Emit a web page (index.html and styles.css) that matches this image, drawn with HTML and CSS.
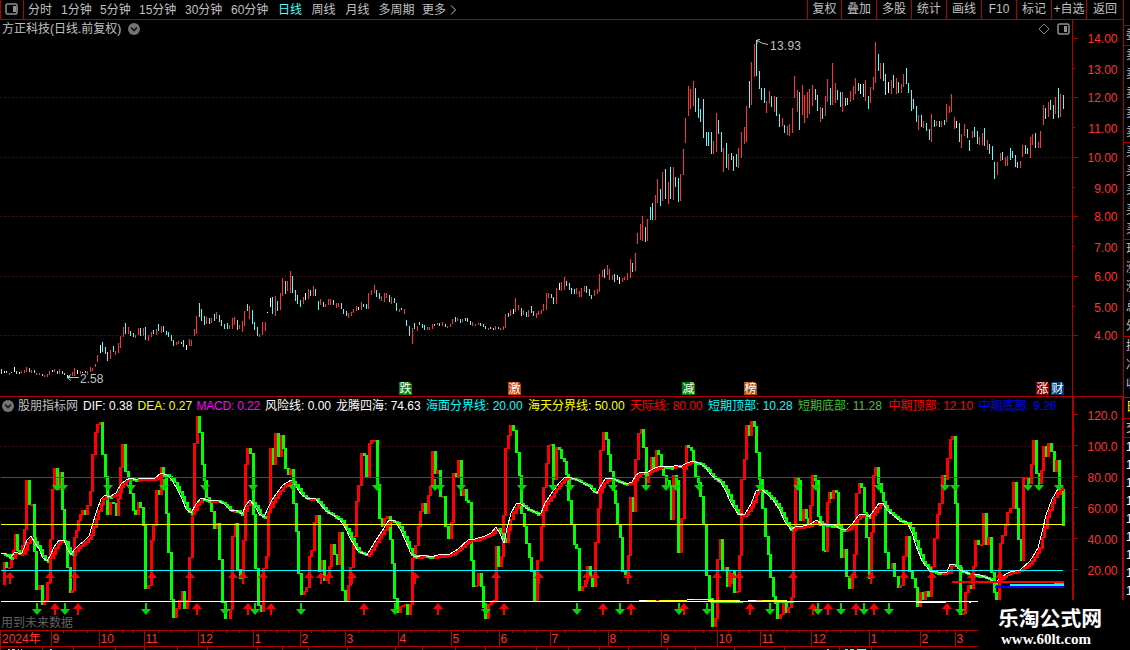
FILE: index.html
```
<!DOCTYPE html>
<html lang="zh-CN">
<head>
<meta charset="UTF-8">
<title>方正科技</title>
<link rel="stylesheet" href="styles.css">
</head>
<body>

<div class="header">
    <div class="panel-btn">
        <svg width="14" height="12"><rect x="1" y="1" width="11" height="10" rx="1.5" class="ico-box"/><rect x="8" y="3" width="3" height="6" class="ico-fill"/></svg>
    </div>
    <div class="periods">
        <span>分时</span><span>1分钟</span><span>5分钟</span><span>15分钟</span><span>30分钟</span><span>60分钟</span>
        <span class="active">日线</span><span>周线</span><span>月线</span><span>多周期</span><span>更多</span>
        <svg width="7" height="10"><path d="M1 0.5L5.5 5L1 9.5" class="more"/></svg>
    </div>
    <div class="tools">
        <span>复权</span><span>叠加</span><span>多股</span><span>统计</span><span>画线</span><span>F10</span><span>标记</span><span>+自选</span><span>返回</span>
    </div>
    <div class="side-top"></div>
</div>

<div class="body">
    <div class="main">
        <div class="price">
            <div class="price-left">
                <div class="title">
                    <span>方正科技(日线.前复权)</span>
                    <svg width="12" height="12"><circle cx="6" cy="6" r="6" class="dot"/><path d="M3 4.5L6 7.5L9 4.5" class="chev"/></svg>
                    <div class="title-icons">
                        <svg width="12" height="12"><path d="M6 1L11 6L6 11L1 6Z" class="diamond"/></svg>
                        <svg width="13" height="12"><rect x="1" y="1" width="11" height="10" rx="1.5" class="ico-box"/><rect x="7" y="3" width="3" height="6" class="ico-fill"/></svg>
                    </div>
                </div>
                <svg id="price" width="1072" height="358" viewBox="0 38 1072 358"></svg>
            </div>
            <svg id="priceAxis" width="51" height="376" viewBox="1072 20 51 376"></svg>
        </div>
        <div class="indicator">
            <div class="ind-left">
                <div class="legend">
                    <svg width="12" height="12"><circle cx="6" cy="6" r="6" class="dot"/><path d="M3 4.5L6 7.5L9 4.5" class="chev"/></svg>
                    <span class="name">股朋指标网</span>
                    <span class="white">DIF: 0.38</span>
                    <span class="yellow">DEA: 0.27</span>
                    <span class="magenta">MACD: 0.22</span>
                    <span class="white">风险线: 0.00</span>
                    <span class="white">龙腾四海: 74.63</span>
                    <span class="cyan">海面分界线: 20.00</span>
                    <span class="yellow">海天分界线: 50.00</span>
                    <span class="red">天际线: 80.00</span>
                    <span class="cyan">短期顶部: 10.28</span>
                    <span class="green">短期底部: 11.28</span>
                    <span class="red">中期顶部: 12.10</span>
                    <span class="blue">中期底部: 9.26</span>
                </div>
                <svg id="ind" width="1072" height="216" viewBox="0 414 1072 216"></svg>
            </div>
            <svg id="indAxis" width="51" height="233" viewBox="1072 397 51 233"></svg>
        </div>
        <svg id="time" width="1123" height="20" viewBox="0 630 1123 20"></svg>
    </div>
    <div class="side">
        <div class="cell h20"><i>委</i></div>
        <div class="cell h97"><i>卖</i><i>卖</i><i>卖</i><i>卖</i><i>卖</i></div>
        <div class="cell h97"><i>买</i><i>买</i><i>买</i><i>买</i><i>买</i></div>
        <div class="cell h97"><i>现</i><i>涨</i><i>涨</i><i>总</i><i>外</i></div>
        <div class="cell h61"><i>换</i><i>净</i><i>收</i></div>
        <div class="cell h21"><i class="yellow">日</i></div>
        <div class="cell h19"><i>交</i></div>
        <div class="cell ones"><i>1</i><i>1</i><i>1</i><i>1</i><i>1</i><i>1</i><i>1</i><i>1</i><i>1</i></div>
    </div>
</div>

<div class="mark">
    <div class="mark-name">乐淘公式网</div>
    <div class="mark-url">www.60lt.com</div>
</div>

<script src="chart.js"></script>
</body>
</html>
```

FILE: styles.css
```
* { box-sizing: border-box; }
body { margin: 0; width: 1130px; height: 650px; overflow: hidden; position: relative; background: #000; color: #c0c0c0; font: 12px/14px "Liberation Sans", "Noto Sans CJK SC", sans-serif; }
svg { display: block; flex: none; }
span { white-space: nowrap; }

.header { display: flex; height: 20px; }
.panel-btn { width: 24px; border: 1px solid #b00000; border-top: none; padding: 3px 0 0 4px; }
.periods { flex: 1; display: grid; grid-template-columns: 33px 39px 39px 46px 46px 47px 33.5px 34px 33px 43.5px 28px 8px; align-items: center; padding-left: 4px; border-bottom: 1px solid #b00000; }
.periods .active { color: #54fcfc; }
.tools { display: grid; grid-template-columns: 34px repeat(7, 35px) 37px; border-bottom: 1px solid #b00000; line-height: 19px; text-align: center; }
.tools span { border-left: 1px solid #b00000; }
.side-top { width: 7px; border-left: 1px solid #b00000; }

.ico-box { fill: none; stroke: #909090; stroke-width: 1.5; }
.ico-fill { fill: #909090; }
.more { fill: none; stroke: #c0c0c0; }
.dot { fill: #747474; }
.chev { fill: none; stroke: #111; stroke-width: 1.6; }
.diamond { fill: none; stroke: #808080; }

.body { display: flex; height: 630px; }
.main { width: 1123px; }
.price, .indicator { display: flex; }
.price { height: 376px; }
.price-left, .ind-left { width: 1072px; }
.title { display: flex; align-items: center; height: 18px; padding-left: 2px; }
.title > svg { margin-left: 7px; }
.title-icons { display: flex; gap: 7px; margin-left: auto; padding-right: 2px; }

.indicator { height: 234px; }
.legend { display: grid; height: 18px; padding: 1px 0 0 2px; align-items: center; border-top: 1px solid #b00000; grid-template-columns: 16px 65px 54.5px 59px 68.5px 71px 90px 102px 102px 78px 90px 90.5px 90px 90px; }
.white { color: #fff; }
.yellow { color: #ff0; }
.magenta { color: #f0f; letter-spacing: -0.2px; }
.cyan { color: #0ff; }
.red { color: #f00; }
.green { color: #40c040; }
.blue { color: #00f; }

.side { width: 7px; overflow: hidden; border-left: 1px solid #b00000; padding-top: 5px; }
.cell { border-top: 1px solid #b00000; padding-left: 2px; overflow: hidden; }
.cell i { display: block; width: 14px; height: 19.2px; line-height: 19px; font-style: normal; }
.h20 { height: 20px; }
.h97 { height: 97px; }
.h61 { height: 61px; }
.h21 { height: 21px; }
.h19 { height: 19px; }
.ones i { height: 18px; color: #fff; }

.mark { position: absolute; left: 978px; top: 600px; width: 152px; height: 50px; background: #000; color: #fff; }
.mark-name { padding: 4px 0 0 20px; font: bold 20.8px/27px "Noto Sans CJK SC", sans-serif; white-space: nowrap; }
.mark-url { padding: 0 0 0 23px; font: bold 15px/17px "Liberation Serif", serif; }

svg text { font-size: 12px; }
.axis-text { fill: #ff3232; text-anchor: end; }
.month { fill: #ff3232; }
.note { fill: #c0c0c0; }
.warn { fill: #606060; }
.tag { fill: #fff; text-anchor: middle; }
.ma { fill: none; stroke: #fff; stroke-width: 1; shape-rendering: crispEdges; }
.note-line { fill: none; stroke: #c0c0c0; }
```

FILE: chart.js
```
const NS = "http://www.w3.org/2000/svg";
const RED = "#b00000";
const GRID = "#900000";

function add(svg, tag, attrs, text){
    const el = document.createElementNS(NS, tag);
    for(const k in attrs) el.setAttribute(k, attrs[k]);
    if(text) el.textContent = text;
    svg.appendChild(el);
}
function rect(svg, x, y, w, h, fill){
    add(svg, "rect", {x: x, y: y, width: w, height: h, fill: fill, "shape-rendering": "crispEdges"});
}
function dots(svg, y, from){
    for(let x = from; x < 1072; x += 4) rect(svg, x, y, 1, 1, GRID);
}

// candles: x top bottom colour
const candles = `1 369 373 c,4 371 372 w,6 371 372 c,9 373 374 r,11 372 372 c,14 367 371 w,16 371 373 c,19 372 373 w,21 371 372 r,24 370 372 r,26 367 371 r,29 368 371 c,31 370 372 r,34 370 372 c,36 373 374 r,39 373 374 r,42 374 375 c,44 375 376 r,47 374 376 r,49 371 374 r,52 370 371 w,54 369 371 r,57 371 373 c,59 369 373 r,62 371 373 c,64 373 374 c,67 375 376 w,69 376 377 c,72 372 375 r,74 368 375 r,77 370 373 w,80 371 373 r,82 372 372 w,85 371 372 c,87 371 374 r,90 367 371 r,92 368 370 r,95 364 366 r,97 355 361 r,100 345 352 w,102 342 351 c,105 347 353 c,107 352 360 c,110 350 358 r,113 346 351 c,115 351 354 r,118 343 352 r,120 336 347 r,123 327 336 r,125 323 333 c,128 327 333 r,130 331 335 c,133 333 336 c,135 335 337 r,138 328 334 r,140 328 335 c,143 328 335 r,145 327 339 c,148 335 340 r,151 332 336 r,153 330 333 c,156 329 334 r,158 324 330 c,161 326 332 r,163 326 331 c,166 331 334 c,168 332 336 c,171 335 340 c,173 340 345 c,176 342 344 r,178 341 343 r,181 342 343 c,183 340 346 c,186 345 349 w,189 339 345 r,191 340 345 r,194 329 335 r,196 316 333 r,199 303 316 c,201 309 320 c,204 316 324 c,206 317 323 r,209 318 323 c,211 318 322 r,214 314 320 c,216 312 318 r,219 315 321 c,221 320 325 c,224 324 328 c,227 323 328 c,229 325 328 r,232 318 328 r,234 317 324 r,237 320 329 c,239 325 328 r,242 321 331 r,244 311 325 r,247 304 310 c,249 306 318 r,252 310 323 c,254 322 329 c,257 327 335 c,259 334 336 r,262 322 334 r,265 322 330 r,267 312 312 w,270 298 306 w,272 297 313 c,275 296 315 r,277 301 310 c,280 293 309 r,282 278 295 r,285 281 293 c,287 281 290 r,290 271 292 r,292 276 292 c,295 290 300 c,297 295 303 c,300 300 306 c,303 297 303 r,305 293 299 w,308 289 298 r,310 290 295 c,313 286 295 r,315 289 295 c,318 301 309 c,320 299 304 r,323 302 306 c,325 304 306 r,328 299 304 r,330 299 304 r,333 300 304 c,336 303 307 r,338 303 306 r,341 303 308 c,343 309 313 c,346 311 315 c,348 313 317 r,351 312 315 r,353 309 312 r,356 306 310 r,358 307 309 w,361 302 309 r,363 304 306 c,366 304 308 c,368 293 308 r,371 290 294 r,374 285 292 r,376 290 296 c,379 293 298 c,381 296 300 r,384 293 301 r,386 293 297 r,389 295 301 c,391 297 303 r,394 298 302 c,396 303 310 c,
399 309 311 r,401 308 309 c,404 309 313 r,406 320 325 c,409 326 335 c,412 328 343 r,414 323 328 c,417 326 330 r,419 322 324 c,422 324 327 c,424 325 329 c,427 327 329 r,429 327 329 r,432 324 328 r,434 324 325 c,437 323 324 r,439 323 325 c,442 322 325 r,445 324 326 c,447 326 327 r,450 324 326 r,452 319 323 r,455 317 321 c,457 318 320 r,460 319 322 c,462 319 321 r,465 318 320 c,467 318 321 c,470 321 324 c,472 322 325 r,475 324 325 r,478 323 324 r,480 323 325 c,483 324 326 c,485 326 328 c,488 328 329 r,490 327 328 c,493 328 329 c,495 326 329 r,498 327 328 c,500 328 329 r,503 326 329 r,505 314 327 r,508 313 316 c,510 310 315 r,513 309 313 w,515 298 311 r,518 305 309 r,521 308 315 c,523 310 314 r,526 312 316 c,528 310 316 r,531 306 312 c,533 311 315 c,536 313 317 r,538 311 314 r,541 310 313 r,543 304 310 r,546 293 309 r,548 293 297 r,551 294 297 c,553 297 303 c,556 288 303 r,559 283 289 w,561 282 290 r,564 277 289 r,566 281 285 c,569 283 289 c,571 288 293 c,574 289 293 c,576 288 293 r,579 291 296 r,581 288 296 r,584 286 291 r,586 286 292 c,589 289 295 c,591 295 298 c,594 290 295 r,597 289 293 r,599 274 291 r,602 270 276 r,604 269 277 c,607 265 274 r,609 269 279 r,612 275 279 r,614 274 281 c,617 275 279 c,619 277 283 w,622 278 281 r,624 277 279 r,627 273 279 r,630 259 277 r,632 263 271 c,635 253 270 r,637 233 243 r,640 224 239 r,642 216 240 r,645 227 241 c,647 219 240 r,650 207 219 c,652 203 219 c,655 195 219 r,657 179 202 r,660 189 205 c,662 172 200 r,665 169 198 c,668 182 203 r,670 167 198 c,673 167 199 r,675 177 186 c,678 178 201 c,
680 174 200 r,683 149 174 r,685 118 142 r,688 86 115 r,690 89 108 r,693 81 105 r,695 88 111 c,698 98 117 c,700 109 121 c,703 99 137 c,706 132 145 c,708 132 145 c,711 132 153 c,713 141 153 r,716 113 151 r,718 120 133 c,721 132 151 c,723 148 171 r,726 143 167 c,728 154 169 r,731 153 159 c,733 156 170 c,736 154 166 c,738 148 167 r,741 132 157 r,744 127 143 r,746 106 141 r,749 81 107 c,751 62 104 r,754 44 76 r,756 40 75 c,759 71 88 c,761 88 99 c,764 88 102 c,766 101 112 r,769 91 102 r,771 96 106 c,774 96 111 r,776 97 115 c,779 114 126 c,782 118 125 r,784 125 132 c,787 126 134 r,789 124 135 r,792 108 132 r,794 76 97 r,797 90 111 r,799 92 129 c,802 85 114 r,804 95 122 r,807 92 117 r,809 89 113 r,812 85 105 r,815 89 99 c,817 95 110 c,820 107 121 r,822 108 118 c,825 96 115 r,827 79 101 r,830 88 104 c,832 63 104 r,835 83 102 r,837 90 99 c,840 92 106 c,842 92 111 r,845 98 105 c,847 98 104 c,850 91 101 r,853 86 99 r,855 78 93 r,858 83 90 c,860 84 93 w,863 84 96 c,865 80 100 r,868 96 108 c,870 87 102 r,873 77 89 r,875 42 82 r,878 54 70 c,880 63 78 r,883 63 80 c,885 74 94 c,888 82 92 w,891 80 93 r,893 75 87 c,896 78 93 r,898 82 92 c,901 84 92 r,903 74 86 r,906 68 83 c,908 83 92 c,911 90 110 c,913 99 108 c,916 106 121 c,918 115 129 r,921 115 126 c,923 121 127 r,926 123 130 c,929 129 139 c,931 114 141 r,934 120 126 c,936 121 125 r,939 121 126 c,941 121 126 r,944 120 124 c,946 104 121 r,949 106 112 r,951 94 111 r,954 117 128 r,956 121 127 w,959 123 141 c,961 134 147 r,964 124 135 r,967 129 137 c,969 140 150 c,972 131 137 r,974 127 136 c,977 131 143 c,979 137 144 r,982 133 144 r,984 128 145 c,987 140 149 r,989 144 153 c,992 146 159 c,994 162 178 c,997 162 174 r,1000 153 160 r,1002 152 159 c,1005 157 165 r,1007 156 165 r,1010 148 159 c,1012 151 157 c,1015 155 166 c,1017 162 167 c,1020 161 167 r,1022 145 156 r,1025 145 153 c,1027 148 153 c,1030 137 157 r,1032 134 144 r,1035 133 147 c,1038 142 147 r,1040 131 147 r,1043 105 124 r,1045 108 118 c,1048 102 116 r,1050 100 109 c,1053 105 118 c,1055 97 113 r,1058 88 117 c,1060 94 116 r,1063 95 108 c`;

const colors = {r: "#ff3232", c: "#54fcfc", w: "#fff"};
const price = document.getElementById("price");
[97, 157, 216, 276, 335].forEach(y => dots(price, y, 1));
candles.split(",").forEach(s => {
    const [x, a, b, c] = s.trim().split(" ");
    rect(price, +x, +a, 1, b - a + 1, colors[c]);
});
add(price, "text", {x: 770, y: 50, class: "note", textLength: 31}, "13.93");
add(price, "path", {d: "M768 44.5L763 43.5L757 40.5M757 44L757 40L760 39.5", class: "note-line"});
add(price, "text", {x: 80, y: 383, class: "note"}, "2.58");
add(price, "path", {d: "M79 377.5H67M71 374.5L67 377.5L71 380.5", class: "note-line"});

[[399, "跌", "#008000"], [508, "激", "#c04010"], [682, "减", "#008000"], [744, "榜", "#b05010"], [1036, "涨", "#800000"], [1051, "财", "#003c74"]].forEach(t => {
    add(price, "path", {d: `M${t[0]} 382h11l2 2v11h-13z`, fill: t[2]});
    add(price, "text", {x: t[0] + 6.5, y: 393, class: "tag"}, t[1]);
});

const pAxis = document.getElementById("priceAxis");
rect(pAxis, 1072, 20, 1, 376, RED);
[38, 68, 97, 127, 157, 187, 216, 246, 276, 306, 335].forEach((y, i) => {
    rect(pAxis, 1073, y, i % 2 ? 2 : 5, 1, RED);
    const ly = [43, 74, 102, 133, 162, 193, 221, 252, 281, 312, 340][i];
    add(pAxis, "text", {x: 1117.5, y: ly, class: "axis-text"}, (14 - i) + ".00");
});

// oscillator: every bar runs from the last level to this one
const osc = `3,584 3,562 5,567 8,567 10,555 12,550 14,534 16,550 18,552 21,545 23,529 25,480 28,504 30,504 33,551 35,589 38,585 41,604 43,600 46,582 49,539 51,489 53,468 56,489 59,472 61,509 63,541 66,567 69,592 71,590 73,537 75,530 77,520 79,514 81,510 84,514 86,505 89,491 91,454 94,432 96,424 99,422 101,454 104,476 106,514 109,502 112,503 115,515 117,498 119,467 121,444 124,471 127,477 129,493 132,510 134,514 137,502 139,507 142,525 144,588 147,585 150,540 152,525 155,490 158,494 160,467 162,475 165,513 167,552 170,599 172,617 175,608 178,600 181,591 183,608 186,600 188,557 191,510 193,443 196,416 198,432 201,464 203,480 205,497 208,502 210,511 213,528 216,523 218,559 221,602 224,618 229,609 231,569 231,536 234,523 236,569 239,578 242,540 244,464 246,448 249,453 252,514 254,568 257,605 260,611 262,568 265,556 267,512 269,448 272,464 274,433 277,456 280,435 282,448 284,468 287,474 289,469 292,503 295,531 297,573 300,594 303,591 305,587 308,556 310,550 313,522 315,515 318,571 321,560 323,580 325,576 328,566 330,544 333,554 336,564 338,532 341,590 344,601 347,585 349,567 352,536 355,501 357,485 360,453 363,455 365,476 368,443 370,440 373,440 376,484 378,518 381,526 383,518 386,516 389,539 391,563 393,598 396,612 399,606 402,605 404,604 406,614 409,604 411,558 414,545 417,526 419,511 421,503 424,513 427,495 429,486 431,451 434,473 436,470 439,496 442,496 444,526 447,538 450,522 452,473 455,477 457,460 460,495 462,489 465,500 467,502 470,560 472,586 475,585 477,573 480,586 482,607 484,618 487,604 490,602 492,600 495,546 497,566 500,556 502,515 504,448 507,435 509,425 512,430 515,452 518,475 520,513 523,526 525,543 528,557 530,571 533,600 536,560 540,526 542,487 545,463 547,445 550,444 552,479 555,447 558,449 560,458 563,461 565,474 567,500 570,524 573,544 575,548 578,590 581,586 584,580 586,566 589,576 591,586 594,542 597,508 599,450 602,432 605,439 607,454 609,471 612,490 614,503 616,524 619,537 621,571 624,574 627,555 629,497 632,511 634,459 637,433 640,429 642,447 645,482 647,471 650,457 652,468 655,450 657,454 660,468 662,475 665,480 668,485 670,519 672,475 675,480 677,552 680,518 683,469 685,445 687,447 690,450 692,463 694,476 697,482 699,496 702,524 705,575 708,598 711,626 714,618 716,559 719,539 721,569 724,567 726,586 728,571 733,592 736,591 738,555 740,479 743,459 745,425 748,435 750,421 753,426 755,452 758,479 761,508 764,536 767,554 769,577 772,596 774,603 776,618 779,614 782,602 785,612 787,607 790,597 792,530 794,478 797,480 799,520 802,509 805,518 807,525 809,505 811,475 814,480 817,516 819,525 822,550 824,551 826,502 828,492 830,498 832,490 835,492 837,525 840,557 843,549 845,576 848,588 851,575 853,554 855,493 858,483 860,487 863,512 865,537 868,578 870,532 872,475 874,467 877,483 880,492 882,501 884,552 887,568 891,563 893,576 897,587 899,585 902,556 905,536 908,571 911,578 914,587 916,606 919,592 922,599 924,591 927,596 930,566 933,538 936,514 938,503 941,475 944,479 946,458 949,439 951,436 954,503 956,565 959,614 962,613 964,592 967,585 970,588 972,566 974,540 977,544 980,544 982,513 985,544 987,537 990,572 993,592 995,600 998,568 999,543 1001,535 1004,525 1006,512 1009,508 1012,482 1015,508 1017,539 1020,560 1022,478 1025,477 1028,483 1030,464 1032,440 1035,473 1038,483 1040,470 1042,446 1045,456 1047,443 1050,451 1053,471 1055,460 1058,489 1062,491 1062,525`;

const ma = `1,553 6,554 10,558 15,552 18,553 22,553 27,540 31,536 35,543 39,549 43,558 47,561 50,556 54,547 59,540 64,540 67,548 71,555 74,550 79,545 84,541 89,536 92,526 97,510 101,499 105,495 109,497 116,493 121,484 126,480 131,478 136,480 140,478 147,478 155,478 161,473 167,475 172,480 177,489 182,499 186,509 191,513 196,504 201,498 208,500 217,500 224,504 230,510 236,510 242,514 246,505 250,500 255,506 259,514 264,517 268,508 272,500 276,494 283,485 291,480 295,485 301,494 306,498 315,498 320,504 326,511 333,515 340,520 346,529 351,540 358,551 367,555 374,543 382,531 389,520 395,521 401,531 406,542 411,554 416,557 423,555 431,557 438,555 450,554 458,549 468,540 475,539 485,536 491,533 496,527 500,534 504,543 507,528 511,513 516,504 520,503 526,508 533,511 538,514 541,513 545,503 553,491 560,482 565,477 570,477 577,480 585,484 589,486 593,491 597,493 600,487 605,479 612,478 620,482 626,484 632,482 636,475 641,472 646,473 655,468 661,466 672,467 676,465 680,467 685,464 692,461 699,463 705,467 712,476 720,481 726,492 731,503 738,514 745,514 751,504 756,491 761,489 767,494 773,500 779,509 785,522 791,530 796,526 803,526 810,524 817,520 822,524 834,525 841,529 847,529 853,523 859,515 865,514 869,517 875,509 879,503 883,503 887,510 893,515 900,521 907,522 912,533 916,546 922,561 930,571 938,572 947,572 950,564 955,565 960,570 970,574 980,575 990,579 995,583 1001,577 1010,572 1020,570 1030,561 1038,548 1042,532 1046,515 1052,499 1058,489 1063,486`;

const ind = document.getElementById("ind");
const parse = s => s.split(" ").map(p => p.split(",").map(Number));
[446, 477, 508, 539, 570].forEach(y => dots(ind, y, 1));

const lv = parse(osc);
for(let i = 1; i < lv.length; i++){
    const a = lv[i - 1][1], b = lv[i][1];
    rect(ind, lv[i][0], Math.min(a, b), 3, Math.max(Math.abs(a - b), 1) + 1, b <= a ? "#f00" : "#0f0");
}

const pts = parse(ma);
function maAt(x){
    for(let i = 1; i < pts.length; i++){
        if(x <= pts[i][0]){
            const [x0, y0] = pts[i - 1], [x1, y1] = pts[i];
            return y0 + (y1 - y0) * (x - x0) / (x1 - x0);
        }
    }
    return 486;
}
for(let x = 3.5; x < 1063; x += 2.53){
    const a = maAt(x - 2.53), b = maAt(x);
    rect(ind, Math.round(x), Math.round(Math.min(a, b)), 3, Math.max(Math.round(Math.abs(a - b)), 1) + 2, b <= a ? "#f00" : "#0f0");
}

rect(ind, 1, 477, 1062, 1, "#f00");
rect(ind, 1, 524, 1062, 1, "#ff0");
rect(ind, 1, 570, 1062, 1, "#0ff");
rect(ind, 1, 601, 1062, 1, "#fff");
add(ind, "polyline", {points: ma, class: "ma"});

// short and mid term levels
[[639, 600, 8, "#fff"], [647, 600, 40, "#ff0"], [656, 600, 3, "#f00"], [664, 600, 20, "#ff0"], [687, 599, 7, "#fff"], [694, 599, 19, "#ff0"], [708, 600, 32, "#ff0"], [710, 602, 33, "#40c040"], [708, 601, 30, "#fff"], [748, 600, 8, "#fff"], [756, 600, 6, "#f88"], [762, 600, 25, "#ff0"], [774, 602, 20, "#40c040"], [916, 602, 30, "#fff"], [969, 602, 2, "#fff"]].forEach(r => rect(ind, r[0], r[1], r[2], 1, r[3]));
rect(ind, 952, 581, 112, 2, "#f00");
rect(ind, 1054, 583, 10, 2, "#40c040");
rect(ind, 1010, 584, 54, 2, "#0ff");
rect(ind, 995, 586, 69, 2, "#00f");

const down = "#00d800", up = "#f00";
function arrow(x, y, dir){
    if(dir === "down") add(ind, "path", {d: `M${x - 1} ${y}h2v6h4l-5 6l-5 -6h4z`, fill: down});
    else add(ind, "path", {d: `M${x - 1} ${y + 12}h2v-6h4l-5 -6l-5 6h4z`, fill: up});
}
[57, 63, 108, 131, 164, 205, 253, 293, 377, 435, 440, 461, 522, 553, 570, 613, 646, 666, 676, 699, 760, 798, 816, 879, 945, 955, 1028, 1039, 1059].forEach(x => arrow(x, 479, "down"));
[10, 50, 75, 152, 190, 233, 243, 263, 309, 321, 329, 352, 415, 496, 539, 587, 595, 628, 717, 732, 739, 793, 853, 871, 904, 932, 972, 1000].forEach(x => arrow(x, 572, "up"));
[37, 65, 146, 225, 255, 301, 395, 486, 577, 620, 679, 707, 770, 818, 841, 864, 889, 960].forEach(x => arrow(x, 603, "down"));
[55, 78, 197, 248, 271, 364, 438, 504, 603, 631, 684, 750, 813, 828, 856, 874, 947].forEach(x => arrow(x, 603, "up"));
add(ind, "text", {x: 1, y: 627, class: "warn"}, "用到未来数据");

const iAxis = document.getElementById("indAxis");
rect(iAxis, 1072, 397, 2, 204, RED);
rect(iAxis, 1072, 396, 51, 2, RED);
rect(iAxis, 1122, 397, 1, 204, RED);
["120.0", "100.0", "80.00", "60.00", "40.00", "20.00"].forEach((t, i) => {
    const y = 415 + i * 31;
    rect(iAxis, 1074, y, 4, 1, RED);
    rect(iAxis, 1074, y + 16, 1, 1, RED);
    add(iAxis, "text", {x: 1117.5, y: y + 6, class: "axis-text"}, t);
});

const time = document.getElementById("time");
rect(time, 0, 630, 978, 1, RED);
rect(time, 0, 646, 978, 1, RED);
rect(time, 0, 630, 1, 20, RED);
add(time, "text", {x: 2, y: 643, class: "month"}, "2024年");
const months = [[51, "9"], [99, "10"], [144, "11"], [198, "12"], [253, "1"], [300, "2"], [345, "3"], [398, "4"], [451, "5"], [499, "6"], [550, "7"], [608, "8"], [661, "9"], [717, "10"], [760, "11"], [811, "12"], [869, "1"], [920, "2"], [955, "3"], [1000, ""]];
months.forEach((m, i) => {
    rect(time, m[0], 630, 1, 16, RED);
    add(time, "text", {x: m[0] + 1.5, y: 643, class: "month"}, m[1]);
    if(i < months.length - 1){
        const step = (months[i + 1][0] - m[0]) / 4;
        for(let k = 1; k < 4; k++) rect(time, Math.round(m[0] + step * k), 631, 1, 2, RED);
    }
});
[42, 73, 115, 144, 177, 207, 257, 282, 308, 347, 395, 422, 455, 485, 536, 568, 599, 628, 667, 695, 734, 784, 839, 871].forEach(x => rect(time, x, 647, 1, 3, RED));
[[8, 649, 2], [12, 649, 3], [18, 649, 1], [21, 649, 1], [50, 649, 2], [827, 649, 2]].forEach(r => rect(time, r[0], r[1], r[2], 1, "#c0c0c0"));
[[845, 649, 3], [850, 649, 4], [857, 649, 9]].forEach(r => rect(time, r[0], r[1], r[2], 1, "#54fcfc"));
```
